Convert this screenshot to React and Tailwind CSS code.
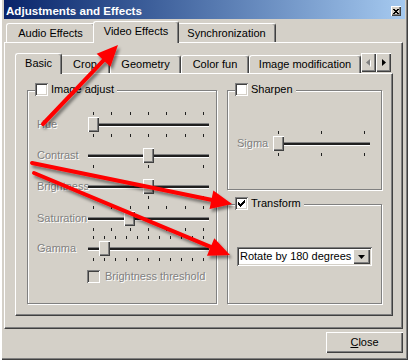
import React from 'react';

const raised = 'shadow-[inset_1px_1px_0_#fff,inset_-1px_-1px_0_#404040,inset_-2px_-2px_0_#808080]';
const sunken = 'shadow-[inset_1px_1px_0_#808080,inset_-1px_-1px_0_#fff,inset_2px_2px_0_#404040,inset_-2px_-2px_0_#d4d0c8]';
const grayText = 'text-[#808080] [text-shadow:1px_1px_0_#fff]';

function Checkbox({ checked, disabled }) {
  return (
    <div className={`w-[13px] h-[13px] shrink-0 flex items-center justify-center ${disabled ? 'bg-[#d4d0c8]' : 'bg-white'} ${sunken}`}>
      {checked && (
        <svg width="7" height="7" viewBox="0 0 7 7" shapeRendering="crispEdges">
          <path d="M0 2h1v1h1v1h1V3h1V2h1V1h1V0h1v3h-1v1h-1v1h-1v1h-1v1H2V6H1V5H0z" fill="#000" />
        </svg>
      )}
    </div>
  );
}

function Tab({ label, className, selected }) {
  return (
    <div
      className={`flex items-center justify-center shrink-0 border-l border-t border-r border-white border-r-[#404040] rounded-t-[3px] shadow-[inset_-1px_0_0_#808080] ${
        selected ? 'relative z-10 -mx-[2px] -mb-px bg-[#d4d0c8]' : ''
      } ${className}`}
    >
      {label}
    </div>
  );
}

function Group({ label, checked, className, children }) {
  return (
    <div className={`relative shrink-0 border border-[#808080] shadow-[inset_1px_1px_0_#fff,1px_1px_0_#fff] ${className}`}>
      <div className="absolute -top-[8px] left-[7px] flex items-center gap-[3px] pr-[3px] bg-[#d4d0c8]">
        <Checkbox checked={checked} />
        <span className="leading-[13px]">{label}</span>
      </div>
      {children}
    </div>
  );
}

function Slider({ width, pos, top = 0, bottom = 0 }) {
  const ticks = (n) => Array.from({ length: n }, (_, i) => Math.round(5 + ((width - 11) * i) / (n - 1)));
  return (
    <div className="relative h-[25px] shrink-0" style={{ width }}>
      {top > 0 &&
        ticks(top).map((x) => <div key={'t' + x} className="absolute top-0 w-px h-[3px] bg-[#202020]" style={{ left: x }} />)}
      <div className="absolute left-0 right-0 top-[11px] h-[4px] border-t border-[#808080] bg-[#202020] border-b border-b-white" />
      <div className={`absolute top-[5px] w-[11px] h-[15px] bg-[#d4d0c8] ${raised}`} style={{ left: pos }} />
      {bottom > 0 &&
        ticks(bottom).map((x) => <div key={'b' + x} className="absolute top-[22px] w-px h-[3px] bg-[#202020]" style={{ left: x }} />)}
    </div>
  );
}

function Row({ label, children, className = '' }) {
  return (
    <div className={`flex items-center ${className}`}>
      <span className={`w-[51px] shrink-0 ${grayText}`}>{label}</span>
      {children}
    </div>
  );
}

function Arrow({ from, to }) {
  const [x1, y1] = from;
  const [x2, y2] = to;
  const dx = x2 - x1;
  const dy = y2 - y1;
  const len = Math.hypot(dx, dy);
  const ux = dx / len;
  const uy = dy / len;
  const nx = -uy;
  const ny = ux;
  const L = 21;
  const W = 9.5;
  const bx = x2 - ux * L;
  const by = y2 - uy * L;
  const pts = [
    [x2, y2],
    [bx + nx * W, by + ny * W],
    [bx - nx * W, by - ny * W],
  ]
    .map((p) => p.join(','))
    .join(' ');
  return (
    <g filter="url(#arrowShadow)">
      <line x1={x1} y1={y1} x2={bx + ux * 2} y2={by + uy * 2} stroke="#ff0000" strokeWidth="4" strokeLinecap="round" />
      <polygon points={pts} fill="#ff0000" />
    </g>
  );
}

export default function App() {
  return (
    <div className="relative w-[408px] h-[360px] overflow-hidden bg-[#d4d0c8] text-[11px] leading-[13px] text-black font-['Liberation_Sans',Arial,sans-serif] shadow-[inset_2px_0_0_#fff,inset_-1px_-1px_0_#404040,inset_-2px_-2px_0_#808080]">
      {/* Title bar */}
      <div className="ml-[4px] mr-[3px] h-[19px] flex items-end justify-between pl-[2px] pr-[4px] pb-[1px] bg-gradient-to-r from-[#0a246a] to-[#a6caf0]">
        <span className="text-white font-bold text-[11.6px] leading-[14px]">Adjustments and Effects</span>
        <div className={`mb-[2px] w-[10px] h-[10px] bg-[#d4d0c8] flex items-center justify-center ${raised}`}>
          <svg width="6" height="5" viewBox="0 0 6 5" shapeRendering="crispEdges">
            <path d="M0 0h1.5l1.5 1.6L4.5 0H6L3.8 2.5 6 5H4.5L3 3.4 1.5 5H0l2.2-2.5z" fill="#000" />
          </svg>
        </div>
      </div>

      {/* Outer tabs */}
      <div className="ml-[4px] flex items-end h-[23px] pl-[2px]">
        <Tab label="Audio Effects" className="w-[89px] h-[19px]" />
        <Tab label="Video Effects" selected className="w-[86px] h-[22px] pb-[2px]" />
        <Tab label="Synchronization" className="w-[99px] h-[19px]" />
      </div>

      {/* Outer pane */}
      <div className="ml-[4px] w-[399px] h-[287px] pl-[10px] border border-white border-r-[#404040] border-b-[#404040] shadow-[inset_-1px_-1px_0_#808080]">
        {/* Inner tabs */}
        <div className="flex items-end h-[30px] pl-[2px]">
          <Tab label="Basic" selected className="w-[47px] h-[21px] pb-[1px]" />
          <Tab label="Crop" className="w-[50px] h-[18px]" />
          <Tab label="Geometry" className="w-[71px] h-[18px]" />
          <Tab label="Color fun" className="w-[68px] h-[18px]" />
          <Tab label="Image modification" className="w-[112px] h-[18px]" />
          <div className="flex mb-px">
            <div className={`w-[15px] h-[19px] bg-[#d4d0c8] flex items-center justify-center ${raised}`}>
              <svg width="5" height="8" viewBox="0 0 5 8">
                <path d="M5 1v7L1 4.5z" fill="#fff" />
                <path d="M4 0v7L0 3.5z" fill="#808080" />
              </svg>
            </div>
            <div className={`w-[15px] h-[19px] bg-[#d4d0c8] flex items-center justify-center ${raised}`}>
              <svg width="4" height="7" viewBox="0 0 4 7">
                <path d="M0 0v7l4-3.5z" fill="#000" />
              </svg>
            </div>
          </div>
        </div>

        {/* Inner pane */}
        <div className="w-[378px] h-[243px] flex gap-[10px] pl-[11px] pt-[16px] border border-white border-r-[#404040] border-b-[#404040] shadow-[inset_-1px_-1px_0_#808080]">
          <Group label="Image adjust" className="w-[190px] h-[214px] pl-[9px]">
            <Row label="Hue" className="mt-[21px]">
              <Slider width={121} pos={0} top={7} bottom={7} />
            </Row>
            <Row label="Contrast" className="mt-[6px]">
              <Slider width={121} pos={55} bottom={3} />
            </Row>
            <Row label="Brightness" className="mt-[6px]">
              <Slider width={121} pos={55} bottom={3} />
            </Row>
            <Row label="Saturation" className="mt-[7px]">
              <Slider width={121} pos={36} top={7} bottom={7} />
            </Row>
            <Row label="Gamma" className="mt-[5px]">
              <Slider width={121} pos={11} top={11} bottom={11} />
            </Row>
            <div className="mt-[9px] ml-[50px] flex items-center gap-[5px]">
              <Checkbox disabled />
              <span className={grayText}>Brightness threshold</span>
            </div>
          </Group>

          <div className="flex flex-col">
            <Group label="Sharpen" className="w-[155px] h-[100px] pl-[9px]">
              <div className="mt-[40px] flex items-center">
                <span className={`w-[36px] shrink-0 ${grayText}`}>Sigma</span>
                <Slider width={97} pos={0} top={3} bottom={3} />
              </div>
            </Group>
            <Group label="Transform" checked className="mt-[14px] w-[155px] h-[100px] pl-[9px]">
              <div className={`mt-[42px] w-[135px] h-[19px] p-[2px] flex items-center bg-white ${sunken}`}>
                <span className="flex-1 pl-px whitespace-nowrap">Rotate by 180 degrees</span>
                <div className={`w-[17px] h-[15px] bg-[#d4d0c8] flex items-center justify-center ${raised}`}>
                  <svg width="7" height="4" viewBox="0 0 7 4">
                    <path d="M0 0h7L3.5 4z" fill="#000" />
                  </svg>
                </div>
              </div>
            </Group>
          </div>
        </div>
      </div>

      {/* Footer */}
      <div className="flex justify-end pr-[5px] mt-[3px]">
        <div className={`w-[77px] h-[21px] flex items-center justify-center bg-[#d4d0c8] ${raised}`}>
          <span>
            <span className="underline underline-offset-[1px]">C</span>lose
          </span>
        </div>
      </div>

      {/* Annotation arrows */}
      <svg className="absolute inset-0 pointer-events-none" width="408" height="360" viewBox="0 0 408 360">
        <defs>
          <filter id="arrowShadow" x="-20%" y="-20%" width="140%" height="140%">
            <feDropShadow dx="2" dy="3" stdDeviation="1.6" floodColor="#000" floodOpacity="0.45" />
          </filter>
        </defs>
        <Arrow from={[43, 124]} to={[118, 45]} />
        <Arrow from={[32, 163]} to={[232, 204]} />
        <Arrow from={[34, 173]} to={[230, 255]} />
      </svg>
    </div>
  );
}
